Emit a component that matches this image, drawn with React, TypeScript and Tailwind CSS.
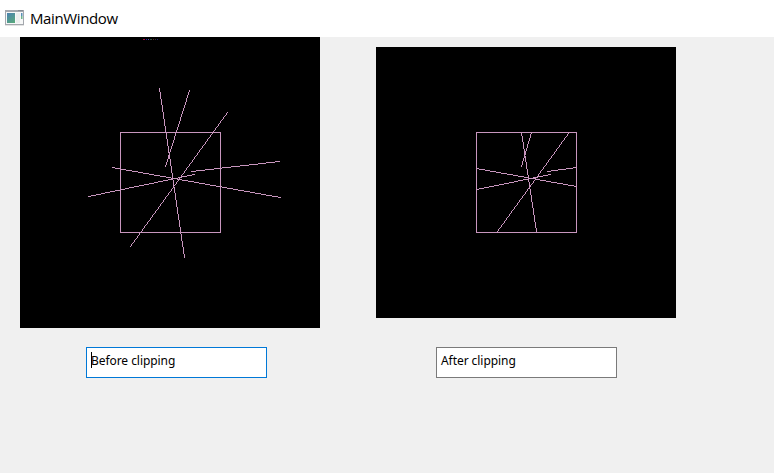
type Line = [number, number, number, number];

const before: Line[] = [
  [139, 51, 164, 220],
  [169, 53, 145, 129],
  [207, 75, 110, 209],
  [92, 130, 260, 160],
  [68, 159, 174, 137],
  [171, 134, 259, 124],
];

const after: Line[] = [
  [145, 85, 160, 184],
  [155, 85, 145, 119],
  [192, 86, 121, 184],
  [100, 121, 200, 139],
  [100, 142, 174, 127],
  [171, 124, 200, 120],
];

/** Stray coloured pixels near the top edge: x, width, colour. */
const specks: [number, number, string][] = [
  [123, 2, "#a01040"],
  [126, 1, "#2020a0"],
  [128, 1, "#5050b0"],
  [130, 2, "#305040"],
  [133, 1, "#602028"],
  [135, 1, "#303030"],
  [137, 1, "#202070"],
];

/** Rasterises a segment with the DDA algorithm, one unit square per pixel. */
function rasterise([x0, y0, x1, y1]: Line) {
  const steps = Math.max(Math.abs(x1 - x0), Math.abs(y1 - y0));
  let d = "";
  for (let i = 0; i <= steps; i++) {
    const x = Math.round(x0 + ((x1 - x0) * i) / steps);
    const y = Math.round(y0 + ((y1 - y0) * i) / steps);
    d += `M${x} ${y}h1v1h-1z`;
  }
  return d;
}

function Plot({
  lines,
  height,
  top,
  noisy,
}: {
  lines: Line[];
  height: number;
  top: number;
  noisy?: boolean;
}) {
  return (
    <svg width="300" height={height} className="block bg-black" shapeRendering="crispEdges">
      {noisy &&
        specks.map(([x, w, fill]) => <rect key={x} x={x} y="2" width={w} height="1" fill={fill} />)}
      <rect x="100.5" y={top + 0.5} width="100" height="100" fill="none" stroke="#c896be" />
      {lines.map((line, i) => (
        <path key={i} d={rasterise(line)} fill="#c896be" />
      ))}
    </svg>
  );
}

function AppIcon() {
  return (
    <svg width="20" height="17" viewBox="0 0 20 17" className="shrink-0">
      <defs>
        <linearGradient id="pane" gradientUnits="userSpaceOnUse" x1="2" y1="3" x2="9" y2="13">
          <stop offset="0" stopColor="#4b82b0" />
          <stop offset="1" stopColor="#58a97c" />
        </linearGradient>
      </defs>
      <rect x="0.5" y="0.5" width="18" height="14" fill="#f7f8f8" stroke="#a4a8ae" />
      <rect x="0" y="0" width="19" height="2" fill="#a4a8ae" />
      <rect x="13" y="0" width="5" height="1" fill="#858b93" />
      <rect x="2" y="3" width="8" height="10" fill="url(#pane)" />
      <rect x="11" y="3" width="4" height="10" fill="#eceeee" />
      <rect x="16" y="3" width="1.5" height="3" fill="#5a8fb8" />
      <rect x="16" y="6" width="1.5" height="3" fill="#6db58c" />
      <rect x="0" y="15" width="19" height="1" fill="#e3e3e3" />
    </svg>
  );
}

function Field({ text, focused }: { text: string; focused?: boolean }) {
  return (
    <div
      className={`flex h-[31px] w-[181px] border bg-white pl-1 ${
        focused ? "border-[#0078d7]" : "border-[#7a7a7a]"
      }`}
    >
      {focused && <span className="-mr-px mt-1 h-4 w-px shrink-0 bg-black" />}
      <span className="mt-[5px] whitespace-nowrap font-['Noto_Sans',sans-serif] text-[12px] leading-4 tracking-[-0.06px] text-black">
        {text}
      </span>
    </div>
  );
}

export default function App() {
  return (
    <div className="flex h-[473px] w-[774px] flex-col overflow-hidden bg-[#f0f0f0]">
      <header className="flex h-[37px] shrink-0 items-center bg-white pl-[5px]">
        <AppIcon />
        <h1 className="mb-0.5 ml-[5px] font-['Open_Sans','Noto_Sans',sans-serif] text-[15px] leading-5 tracking-[-0.38px] text-black">
          MainWindow
        </h1>
      </header>
      <main className="flex">
        <section className="ml-5 w-[300px]">
          <Plot lines={before} height={291} top={95} noisy />
          <div className="ml-[66px] mt-[19px]">
            <Field text="Before clipping" focused />
          </div>
        </section>
        <section className="ml-14 w-[300px] pt-2.5">
          <Plot lines={after} height={271} top={85} />
          <div className="ml-[60px] mt-[29px]">
            <Field text="After clipping" />
          </div>
        </section>
      </main>
    </div>
  );
}
